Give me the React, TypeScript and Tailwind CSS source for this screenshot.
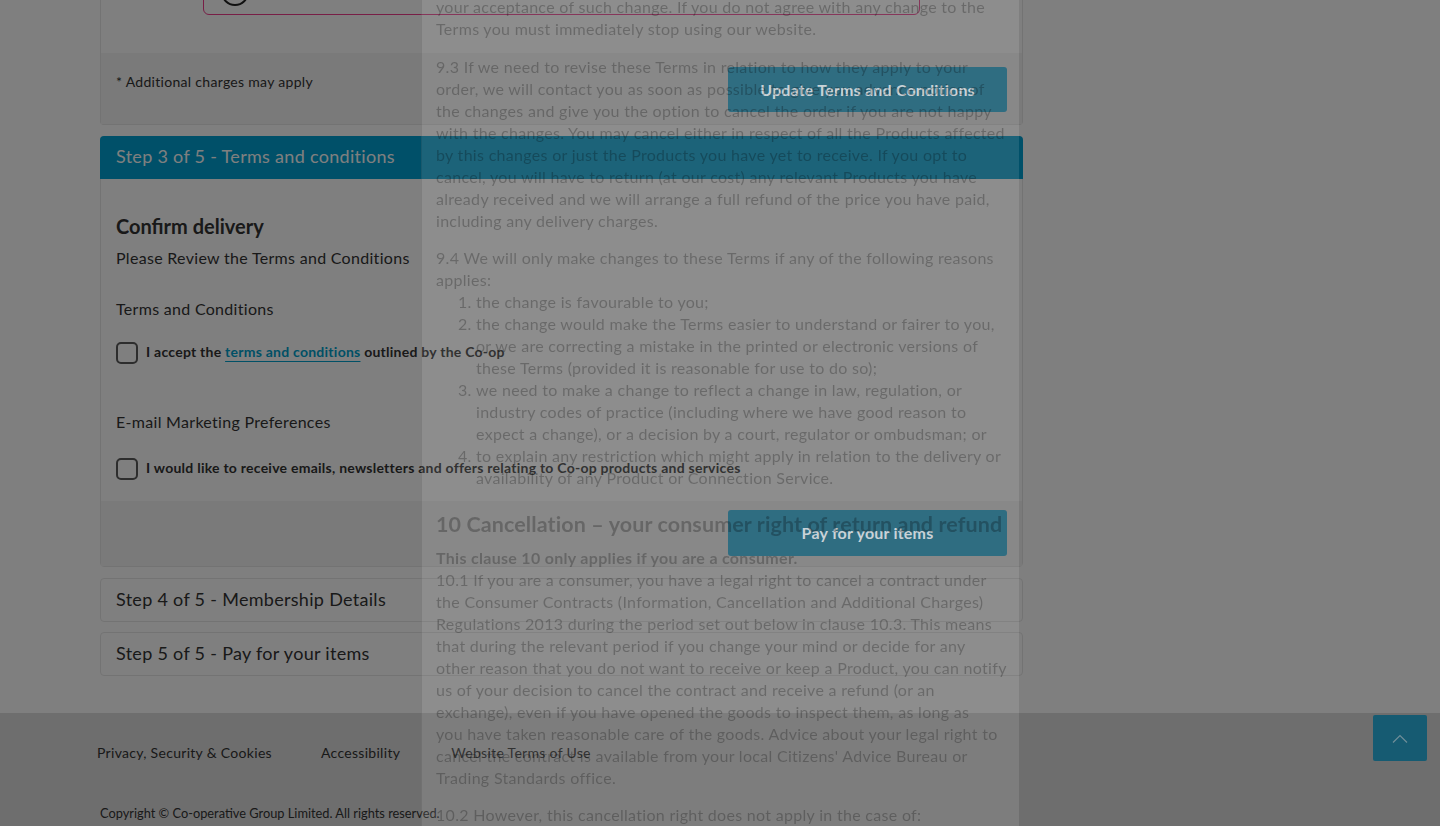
import React from 'react'

const para1 = ['your acceptance of such change. If you do not agree with any change to the', 'Terms you must immediately stop using our website.']

const para93 = [
  '9.3 If we need to revise these Terms in relation to how they apply to your',
  'order, we will contact you as soon as possible to give you advance notice of',
  'the changes and give you the option to cancel the order if you are not happy',
  'with the changes. You may cancel either in respect of all the Products affected',
  'by this changes or just the Products you have yet to receive. If you opt to',
  'cancel, you will have to return (at our cost) any relevant Products you have',
  'already received and we will arrange a full refund of the price you have paid,',
  'including any delivery charges.',
]

const reasons = [
  ['the change is favourable to you;'],
  [
    'the change would make the Terms easier to understand or fairer to you,',
    'or we are correcting a mistake in the printed or electronic versions of',
    'these Terms (provided it is reasonable for use to do so);',
  ],
  [
    'we need to make a change to reflect a change in law, regulation, or',
    'industry codes of practice (including where we have good reason to',
    'expect a change), or a decision by a court, regulator or ombudsman; or',
  ],
  [
    'to explain any restriction which might apply in relation to the delivery or',
    'availability of any Product or Connection Service.',
  ],
]

const para101 = [
  '10.1 If you are a consumer, you have a legal right to cancel a contract under',
  'the Consumer Contracts (Information, Cancellation and Additional Charges)',
  'Regulations 2013 during the period set out below in clause 10.3. This means',
  'that during the relevant period if you change your mind or decide for any',
  'other reason that you do not want to receive or keep a Product, you can notify',
  'us of your decision to cancel the contract and receive a refund (or an',
  'exchange), even if you have opened the goods to inspect them, as long as',
  'you have taken reasonable care of the goods. Advice about your legal right to',
  "cancel the contract is available from your local Citizens' Advice Bureau or",
  'Trading Standards office.',
]

function Lines({ lines }: { lines: string[] }) {
  return (
    <>
      {lines.map((l) => (
        <span key={l} className="block whitespace-nowrap">
          {l}
        </span>
      ))}
    </>
  )
}

function Checkbox({ children }: { children: React.ReactNode }) {
  return (
    <label className="flex items-center gap-2">
      <span className="h-[22px] w-[22px] shrink-0 rounded-[5px] border-2 border-[#5a5a5a] bg-white" />
      <span className="-mt-[3px] text-[14px] font-bold tracking-[0.25px] text-[#333]">{children}</span>
    </label>
  )
}

function TermsModal() {
  return (
    <div className="fixed top-0 bottom-0 left-[421px] z-30 w-[598px] overflow-hidden border-l border-black/10 bg-white/[0.11] pr-[15px] pl-[14px] text-[16px] leading-[22px] tracking-[0.3px] text-black/25">
      <div className="-mt-[4px]">
        <p className="mb-[16px]">
          <Lines lines={para1} />
        </p>
        <p className="mb-[15px]">
          <Lines lines={para93} />
        </p>
        <p>
          <Lines lines={['9.4 We will only make changes to these Terms if any of the following reasons', 'applies:']} />
        </p>
        <ol className="mb-[21px] list-decimal pl-[40px]">
          {reasons.map((r, i) => (
            <li key={i}>
              <Lines lines={r} />
            </li>
          ))}
        </ol>
        <h3 className="mb-[8px] whitespace-nowrap text-[21.5px] leading-[29px] font-bold tracking-[0.1px]">
          10 Cancellation – your consumer right of return and refund
        </h3>
        <p className="font-bold">This clause 10 only applies if you are a consumer.</p>
        <p className="mb-[15px]">
          <Lines lines={para101} />
        </p>
        <p>
          <Lines lines={['10.2 However, this cancellation right does not apply in the case of:']} />
        </p>
      </div>
    </div>
  )
}

export default function App() {
  return (
    <div className="relative h-[826px] overflow-hidden bg-white font-['Lato',sans-serif] tracking-[0.3px] text-[#333]">
      <main className="ml-[100px] w-[923px]">
        {/* delivery options card, scrolled mostly out of view */}
        <div className="rounded-b-[4px] border border-t-0 border-[#e6e6e6]">
          <div className="h-[53px] overflow-hidden">
            <div className="-mt-[45px] ml-[102px] flex h-[60px] w-[717px] items-start rounded-md border border-[#f03c8c] pt-[22px] pl-[17px]">
              <span className="h-[28px] w-[28px] rounded-full border-2 border-[#222]" />
            </div>
          </div>
          <div className="flex h-[71px] items-start justify-between bg-[#f4f4f4] pt-[14px] pr-[15px] pl-[15px]">
            <span className="mt-[4px] text-[14px]">* Additional charges may apply</span>
            <button className="relative z-20 h-[45px] w-[279px] rounded-[3px] bg-[#165b72] text-[16px] font-bold tracking-[0.2px] text-[#c3cdd2]">
              Update Terms and Conditions
            </button>
          </div>
        </div>

        {/* step 3 */}
        <section className="mt-[11px] rounded-[4px] border border-[#e6e6e6]">
          <div className="-mx-px -mt-px flex h-[43px] items-center rounded-t-[4px] bg-[#00a0d2] px-[16px] pb-[2px] text-[18px] text-white">
            Step 3 of 5 - Terms and conditions
          </div>
          <div className="h-[322px] px-[15px] pt-[33px]">
            <h2 className="text-[20px] leading-[28px] font-bold tracking-normal">Confirm delivery</h2>
            <p className="mt-[6px] text-[16px] leading-[24px]">Please Review the Terms and Conditions</p>
            <p className="mt-[27px] text-[16px] leading-[24px]">Terms and Conditions</p>
            <div className="mt-[21px]">
              <Checkbox>
                I accept the{' '}
                <a className="text-[#00a1cc] underline underline-offset-[4px]">terms and conditions</a> outlined by the
                Co-op
              </Checkbox>
            </div>
            <p className="mt-[46px] text-[16px] leading-[24px]">E-mail Marketing Preferences</p>
            <div className="mt-[24px]">
              <Checkbox>I would like to receive emails, newsletters and offers relating to Co-op products and services</Checkbox>
            </div>
          </div>
          <div className="flex h-[65px] items-start justify-end bg-[#f4f4f4] pt-[9px] pr-[15px]">
            <button className="relative z-20 h-[46px] w-[279px] rounded-[3px] bg-[#165b72] text-[16px] font-bold tracking-[0.2px] text-[#c3cdd2]">
              Pay for your items
            </button>
          </div>
        </section>

        <section className="mt-[11px] flex h-[44px] items-center rounded-[4px] border border-[#e6e6e6] px-[15px] pb-[2px] text-[18px]">
          Step 4 of 5 - Membership Details
        </section>
        <section className="mt-[10px] flex h-[44px] items-center rounded-[4px] border border-[#e6e6e6] px-[15px] pb-[2px] text-[18px]">
          Step 5 of 5 - Pay for your items
        </section>
      </main>

      <footer className="mt-[37px] h-[200px] bg-[#dcdcdc] pl-[97px]">
        <nav className="flex gap-[49px] pt-[30px] text-[14px] leading-[20px] text-[#333]">
          <a>Privacy, Security &amp; Cookies</a>
          <a>Accessibility</a>
          <a className="ml-[2px]">Website Terms of Use</a>
        </nav>
        <p className="mt-[40px] pl-[3px] text-[12.8px] leading-[20px] tracking-normal text-[#333]">
          Copyright © Co-operative Group Limited. All rights reserved.
        </p>
      </footer>

      <div className="fixed inset-0 z-10 bg-black/50" />

      <button className="fixed right-[13px] bottom-[65px] z-20 flex h-[46px] w-[54px] items-center justify-center rounded-[2px] bg-[#165b72]">
        <svg width="16" height="9" viewBox="0 0 16 9" fill="none">
          <path d="M1 8.5 8 1.5l7 7" stroke="#6f8e99" strokeWidth="1.2" />
        </svg>
      </button>

      <TermsModal />
    </div>
  )
}
